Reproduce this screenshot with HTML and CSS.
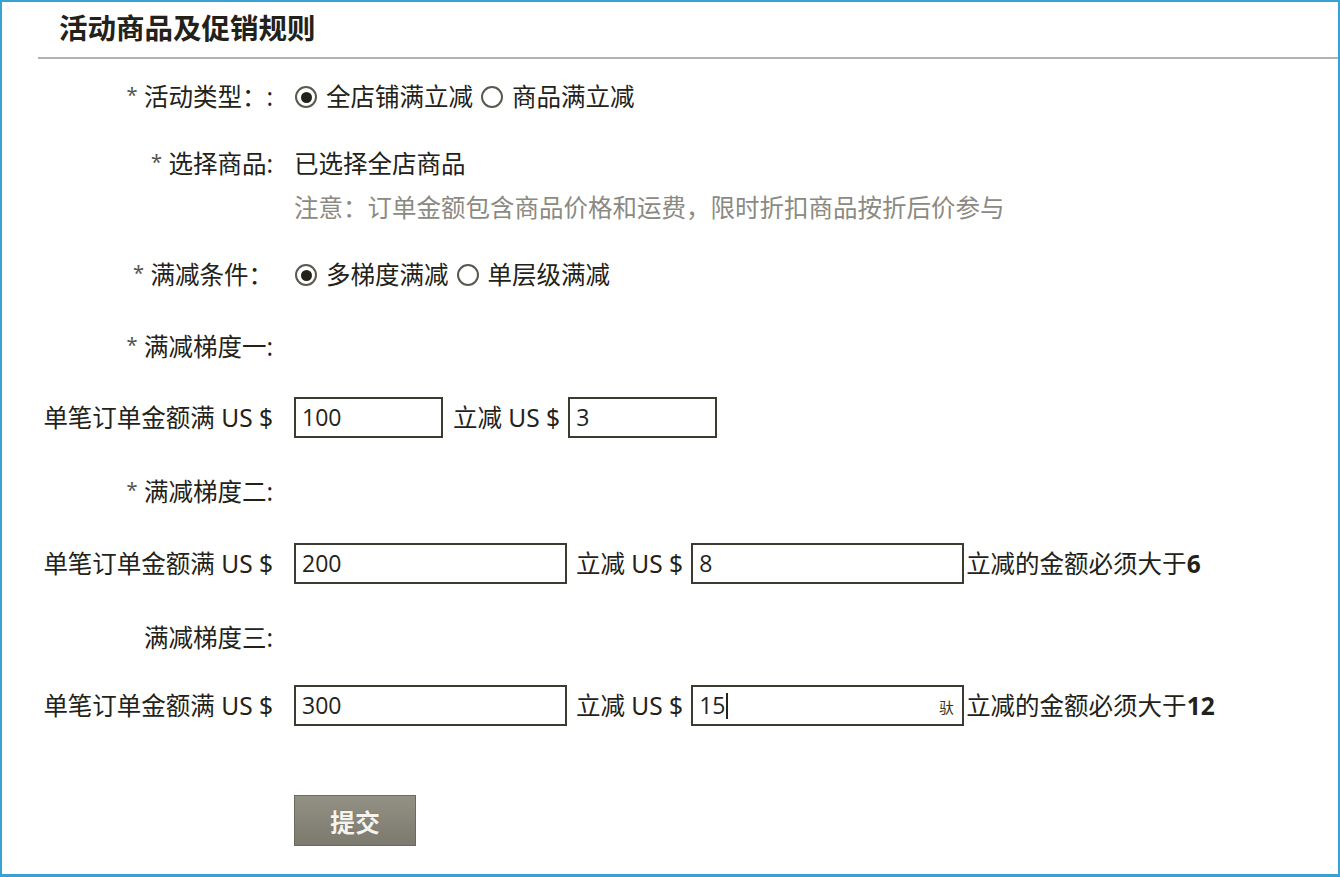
FILE: index.html
```html
<!DOCTYPE html>
<html lang="zh-CN">
<head>
<meta charset="utf-8">
<title>活动商品及促销规则</title>
<link rel="stylesheet" href="styles.css">
</head>
<body>
<div class="frame">
  <div class="title">活动商品及促销规则</div>
  <div class="rule"></div>
  <div class="form">
    <div class="row">
      <div class="label"><span class="star">*</span> 活动类型：:</div>
      <div class="content">
        <span class="radio checked"></span><span class="opt">全店铺满立减</span>
        <span class="radio"></span><span class="opt">商品满立减</span>
      </div>
    </div>
    <div class="row row-tall gap-25">
      <div class="label"><span class="star">*</span> 选择商品:</div>
      <div class="content stack">
        <div>已选择全店商品</div>
        <div class="note">注意：订单金额包含商品价格和运费，限时折扣商品按折后价参与</div>
      </div>
    </div>
    <div class="row gap-25">
      <div class="label"><span class="star">*</span> 满减条件：</div>
      <div class="content">
        <span class="radio checked"></span><span class="opt">多梯度满减</span>
        <span class="radio"></span><span class="opt">单层级满减</span>
      </div>
    </div>
    <div class="row gap-32">
      <div class="label"><span class="star">*</span> 满减梯度一:</div>
      <div class="content"></div>
    </div>
    <div class="row row-input gap-30">
      <div class="label">单笔订单金额满 US $</div>
      <div class="content">
        <div class="field small">100</div>
        <span class="mid">立减 US $</span>
        <div class="field small">3</div>
      </div>
    </div>
    <div class="row gap-34">
      <div class="label"><span class="star">*</span> 满减梯度二:</div>
      <div class="content"></div>
    </div>
    <div class="row row-input gap-31">
      <div class="label">单笔订单金额满 US $</div>
      <div class="content">
        <div class="field large">200</div>
        <span class="mid wide">立减 US $</span>
        <div class="field large">8</div>
        <span class="hint">立减的金额必须大于<b>6</b></span>
      </div>
    </div>
    <div class="row gap-34">
      <div class="label">满减梯度三:</div>
      <div class="content"></div>
    </div>
    <div class="row row-input gap-27">
      <div class="label">单笔订单金额满 US $</div>
      <div class="content">
        <div class="field large">300</div>
        <span class="mid wide">立减 US $</span>
        <div class="field large focus">15<span class="caret"></span><span class="ime">驮</span></div>
        <span class="hint">立减的金额必须大于<b>12</b></span>
      </div>
    </div>
    <div class="row row-btn gap-69">
      <div class="label"></div>
      <div class="content">
        <button class="submit" type="button">提交</button>
      </div>
    </div>
  </div>
</div>
</body>
</html>
```
FILE: styles.css
```css
html, body {
  margin: 0;
  padding: 0;
  background: #ffffff;
}
body {
  font-family: "Noto Sans", "Noto Sans CJK SC", sans-serif;
  color: #232219;
  font-size: 24.5px;
}
.frame {
  width: 1340px;
  height: 877px;
  box-sizing: border-box;
  border: 2px solid #38a3d3;
  border-bottom-width: 3px;
}
.title {
  height: 55px;
  line-height: 50px;
  padding-left: 57px;
  font-size: 28.5px;
  font-weight: bold;
  color: #23221a;
  font-family: "Noto Sans CJK SC", sans-serif;
}
.rule {
  margin-left: 36px;
  border-top: 2px solid #b2b2ae;
}
.form {
  padding-top: 18px;
  display: flex;
  flex-direction: column;
}
.row {
  display: grid;
  grid-template-columns: 271px 1fr;
  column-gap: 21px;
  height: 40px;
  line-height: 40px;
}
.row-tall {
  height: auto;
  line-height: 44px;
}
.row-input {
  height: 41px;
  line-height: 41px;
}
.row-btn {
  height: 51px;
}
.gap-25 { margin-top: 25px; }
.gap-27 { margin-top: 27px; }
.gap-30 { margin-top: 30px; }
.gap-31 { margin-top: 31px; }
.gap-32 { margin-top: 32px; }
.gap-34 { margin-top: 34px; }
.gap-69 { margin-top: 69px; }
.label {
  text-align: right;
  white-space: nowrap;
}
.star {
  color: #55544c;
  font-size: 20px;
  vertical-align: top;
  position: relative;
  top: -2px;
}
.content {
  display: flex;
  align-items: center;
  white-space: nowrap;
}
.content.stack {
  display: block;
}
.note {
  color: #8b8a82;
}
.radio {
  width: 18px;
  height: 18px;
  border: 2px solid #5a5950;
  border-radius: 50%;
  box-sizing: content-box;
  display: inline-flex;
  align-items: center;
  justify-content: center;
  margin-left: 1px;
  margin-right: 9px;
  background: #fff;
}
.radio.checked::after {
  content: "";
  width: 11px;
  height: 11px;
  border-radius: 50%;
  background: #232219;
}
.opt {
  margin-right: 7px;
}
.field {
  position: relative;
  box-sizing: border-box;
  height: 41px;
  border: 2px solid #3c3b31;
  padding-left: 6px;
  font-family: "Open Sans", "Noto Sans", sans-serif;
  font-size: 23px;
  line-height: 39px;
  color: #24231c;
  background: #fff;
  display: flex;
  align-items: center;
}
.field.small { width: 149px; }
.field.large { width: 273px; }
.mid {
  margin: 0 8px 0 10px;
}
.mid.wide {
  margin: 0 8px 0 9px;
}
.hint {
  margin-left: 2px;
}
.hint b {
  font-family: "Open Sans", "Noto Sans", sans-serif;
  font-weight: bold;
}
.caret {
  display: inline-block;
  width: 2px;
  height: 26px;
  background: #24231c;
  margin-left: 1px;
}
.ime {
  position: absolute;
  right: 8px;
  top: 0;
  font-size: 15px;
  font-family: "Noto Sans CJK SC", sans-serif;
  color: #34332a;
}
.submit {
  width: 122px;
  height: 51px;
  border: 1px solid #6c6a5e;
  background: linear-gradient(#939184, #7c7a6e);
  color: #f4f3ee;
  font-family: "Noto Sans CJK SC", sans-serif;
  font-size: 25px;
  font-weight: bold;
  padding: 0;
  text-shadow: 0 0 1px rgba(0,0,0,0.3);
}
```
